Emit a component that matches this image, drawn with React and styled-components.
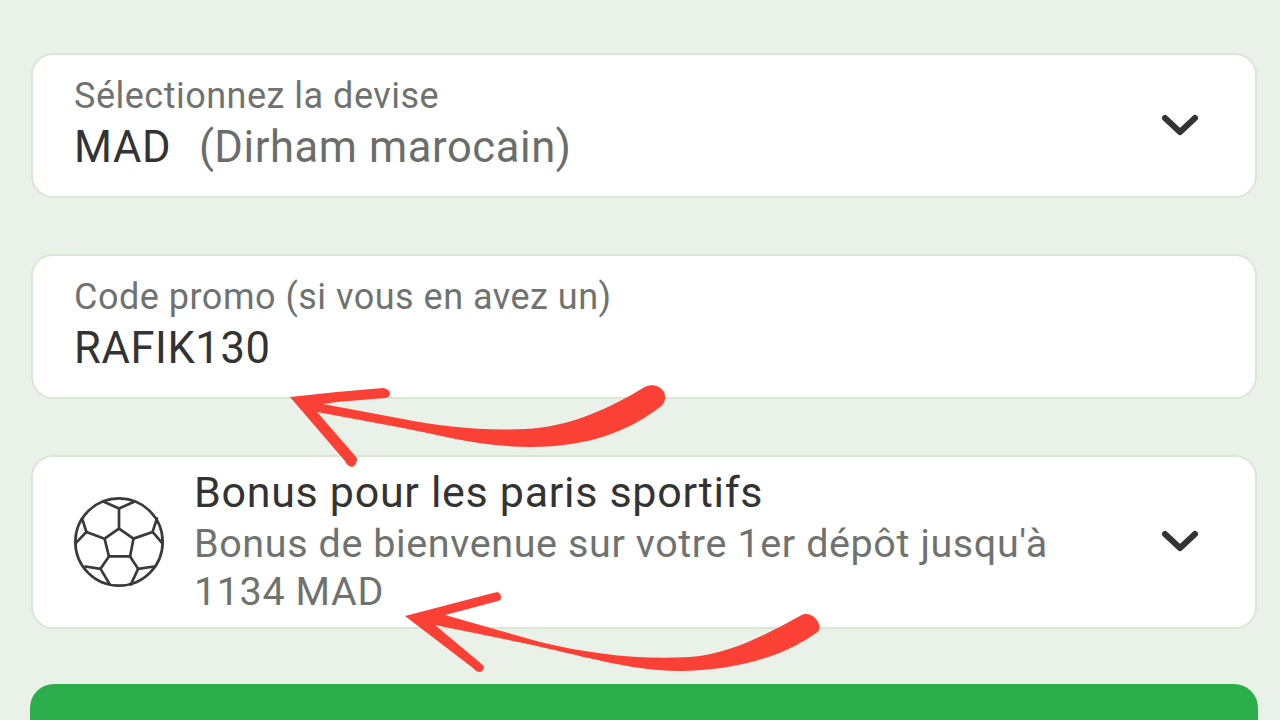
import React from 'react';
import styled, { createGlobalStyle } from 'styled-components';

const Global = createGlobalStyle`
  html, body { margin: 0; padding: 0; background: #e9f1e9; }
  body { font-family: Roboto, "Liberation Sans", sans-serif; overflow: hidden; }
`;

const Page = styled.div`
  position: relative;
  width: 1280px;
  height: 720px;
  overflow: hidden;
  box-sizing: border-box;
  padding: 53px 22px 0 31px;
  display: flex;
  flex-direction: column;
  background: #e9f1e9;
`;

const Card = styled.div`
  box-sizing: border-box;
  flex: none;
  width: 1226px;
  height: ${p => p.$h}px;
  margin-bottom: ${p => p.$mb}px;
  padding: 0 40px 0 41px;
  display: flex;
  align-items: center;
  background: #fff;
  border: 2px solid #d9e8d4;
  border-radius: 22px;
`;

const Body = styled.div`
  flex: 1;
  min-width: 0;
  padding-bottom: 2px;
`;

const Label = styled.div`
  font-size: 36px;
  line-height: 44px;
  letter-spacing: 0.5px;
  margin-bottom: 2px;
  color: #6f736f;
`;

const Value = styled.div`
  font-size: 43.5px;
  line-height: 56px;
  letter-spacing: 0.6px;
  color: #333;
  white-space: pre;
`;

const Muted = styled.span`
  margin-left: 5px;
  color: #6a6e6a;
`;

const BallWrap = styled.div`
  width: 90px;
  height: 90px;
  margin-right: 30px;
  flex: none;
`;

const BonusBody = styled.div`
  flex: 1;
  width: 880px;
  padding-bottom: 2px;
`;

const BonusTitle = styled.div`
  font-size: 43px;
  line-height: 52px;
  letter-spacing: 0.7px;
  margin-bottom: 2px;
  color: #333;
`;

const BonusText = styled.div`
  font-size: 39.5px;
  line-height: 48px;
  letter-spacing: 0.6px;
  color: #6f736f;
  max-width: 880px;
`;

const Chevron = styled.svg`
  width: 36px;
  height: 24px;
  flex: none;
  margin-right: 17px;
`;

const Submit = styled.button`
  display: block;
  flex: none;
  width: 1228px;
  height: 120px;
  margin-left: -1px;
  border: none;
  border-radius: 24px;
  background: #2dae4c;
`;

const Overlay = styled.svg`
  position: absolute;
  left: 0;
  top: 0;
  pointer-events: none;
`;

const Down = () => (
  <Chevron viewBox="0 0 36 24" fill="none" stroke="#333" strokeWidth="6" strokeLinecap="round" strokeLinejoin="round">
    <path d="M3 4 L18 18 L33 4" />
  </Chevron>
);

const Ball = () => (
  <BallWrap>
    <svg width="90" height="90" viewBox="71 51 268 268" fill="none" stroke="#3a3a3a" strokeWidth="8" strokeLinejoin="round" strokeLinecap="round">
      <circle cx="205" cy="185" r="130" />
      <path d="M205 145 L248 175 L238 228 L175 228 L162 175 Z" />
      <path d="M205 145 L205 85 M248 175 L305 155 M238 228 L262 265 M175 228 L150 265 M162 175 L108 155" />
      <path d="M160 65 L205 85 L250 65" />
      <path d="M318 115 L305 155 L335 190" />
      <path d="M95 115 L108 155 L75 190" />
      <path d="M310 258 L262 265 L240 312" />
      <path d="M105 258 L150 265 L178 312" />
    </svg>
  </BallWrap>
);

export default function App() {
  return (
    <Page>
      <Global />
      <Card $h={145} $mb={56}>
        <Body>
          <Label>Sélectionnez la devise</Label>
          <Value>MAD  <Muted>(Dirham marocain)</Muted></Value>
        </Body>
        <Down />
      </Card>
      <Card $h={145} $mb={56}>
        <Body>
          <Label>Code promo (si vous en avez un)</Label>
          <Value>RAFIK130</Value>
        </Body>
      </Card>
      <Card $h={174} $mb={55}>
        <Ball />
        <BonusBody>
          <BonusTitle>Bonus pour les paris sportifs</BonusTitle>
          <BonusText>Bonus de bienvenue sur votre 1er dépôt jusqu'à 1134 MAD</BonusText>
        </BonusBody>
        <Down />
      </Card>
      <Submit />
      <Overlay width="1280" height="720" viewBox="0 0 1280 720" fill="#fb4135">
        <path d="M290 397 L337 392 L383 388 Q390 389 390 394 Q389 398 385 398 L337 402 L323 404 L403 419 C440 426 480 431 525 429 C570 427 610 408 643 388 C650 383 660 385 664 392 C667 400 663 405 660 407 C630 430 590 447 530 447 C480 447 440 435 403 428 L317 412 L357 458 Q357 465 352 467 Q347 466 345 461 Z" />
        <path d="M405 616 L497 592 Q501 593 501 597 Q501 600 498 601 L445 615 L540 642 C590 654 640 660 690 657 C730 654 765 635 800 616 C807 611 816 616 819 624 C821 630 817 633 813 635 C780 658 730 671 680 671 C630 671 580 655 523 643 L435 625 L484 666 Q484 671 480 672 Q476 672 473 668 Z" />
      </Overlay>
    </Page>
  );
}
